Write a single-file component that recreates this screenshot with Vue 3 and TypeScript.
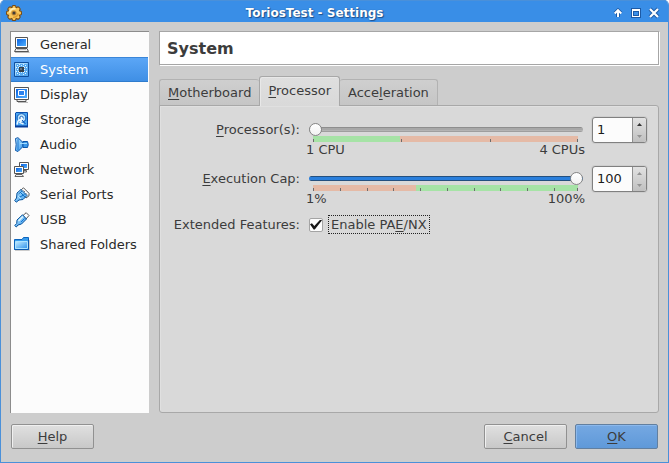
<script setup lang="ts">
import { computed, ref } from 'vue'

type Category =
  | 'General' | 'System' | 'Display' | 'Storage' | 'Audio'
  | 'Network' | 'Serial Ports' | 'USB' | 'Shared Folders'

interface TabItem {
  id: string
  before: string
  key: string
  after: string
}

const categories: Category[] = [
  'General', 'System', 'Display', 'Storage', 'Audio',
  'Network', 'Serial Ports', 'USB', 'Shared Folders',
]
const tabs: TabItem[] = [
  { id: 'motherboard', before: '', key: 'M', after: 'otherboard' },
  { id: 'processor', before: '', key: 'P', after: 'rocessor' },
  { id: 'acceleration', before: 'Acce', key: 'l', after: 'eration' },
]

const category = ref<Category>('System')
const activeTab = ref('processor')
const cpus = ref(1)
const cap = ref(100)
const pae = ref(true)

const CPU_MAX = 4
const CAP_MAX = 100

const position = (value: number, max: number): number => ((value - 1) / (max - 1)) * 100
const cpuTicks = [1, 2, 3, 4].map((v) => position(v, CPU_MAX))
const capTicks = [1, 11, 21, 31, 41, 51, 61, 71, 81, 91, 100].map((v) => position(v, CAP_MAX))
const cpuFill = computed(() => position(cpus.value, CPU_MAX))
const capFill = computed(() => position(cap.value, CAP_MAX))

function stepCpus(delta: number): void {
  cpus.value = Math.min(CPU_MAX, Math.max(1, cpus.value + delta))
}
function stepCap(delta: number): void {
  cap.value = Math.min(CAP_MAX, Math.max(1, cap.value + delta))
}
</script>

<template>
  <div class="window">
    <header class="titlebar">
      <svg class="gear" viewBox="0 0 16 16" aria-hidden="true">
        <g fill="#7a4a10">
          <rect v-for="a in [0, 45, 90, 135]" :key="a" x="5.6" y="0" width="4.8" height="16" rx="1.6" :transform="`rotate(${a} 8 8)`" />
          <circle cx="8" cy="8" r="6.6" />
        </g>
        <g fill="#f7c65c">
          <rect v-for="a in [0, 45, 90, 135]" :key="a" x="6.6" y="1" width="2.8" height="14" rx="1" :transform="`rotate(${a} 8 8)`" />
          <circle cx="8" cy="8" r="5.6" />
        </g>
        <path d="M3.6 7.6A4.5 4.5 0 0 1 9.5 3.8" fill="none" stroke="#ffeeb4" stroke-width="1.8" />
        <path d="M12.2 8.5A4.5 4.5 0 0 1 7 12.2" fill="none" stroke="#e29d2c" stroke-width="1.6" />
        <circle cx="8" cy="8" r="2.6" fill="#c48c35" />
        <circle cx="8" cy="8" r="1.5" fill="#403c38" />
      </svg>
      <h1>ToriosTest - Settings</h1>
      <div class="window-controls">
        <button type="button" aria-label="Shade">
          <svg viewBox="0 0 12 12"><path d="M6 10V4M3 6.5L6 3.5L9 6.5" fill="none" stroke="#1d5aa5" stroke-width="4" /><path d="M6 10V4M2.7 6.5L6 3.2L9.3 6.5" fill="none" stroke="#fff" stroke-width="2" /></svg>
        </button>
        <button type="button" aria-label="Maximize">
          <svg viewBox="0 0 12 12"><path d="M1 1H11V11H1Z" fill="#1d5aa5" /><path d="M2 2H10V10H2Z" fill="#fff" /><path d="M3 4H9V9H3Z" fill="#1d5aa5" /><path d="M4 5H8V8H4Z" fill="#3b8fe8" /></svg>
        </button>
        <button type="button" aria-label="Close">
          <svg viewBox="0 0 12 12"><path d="M2 2L10 10M10 2L2 10" stroke="#1d5aa5" stroke-width="4" /><path d="M2 2L10 10M10 2L2 10" stroke="#fff" stroke-width="2.2" /></svg>
        </button>
      </div>
    </header>

    <main class="body">
      <nav class="categories" aria-label="Categories">
        <button
          v-for="name in categories"
          :key="name"
          type="button"
          class="category"
          :class="{ selected: name === category }"
          @click="category = name"
        >
          <svg class="icon" viewBox="0 0 16 16" aria-hidden="true">
            <defs>
              <linearGradient id="screen" x1="0" y1="0" x2="1" y2="1">
                <stop offset="0" stop-color="#0a62e0" /><stop offset="1" stop-color="#4fb0ff" />
              </linearGradient>
              <linearGradient id="sky" x1="0" y1="0" x2="1" y2="1">
                <stop offset="0" stop-color="#c4ecff" /><stop offset="1" stop-color="#2f93ec" />
              </linearGradient>
            </defs>
            <g v-if="name === 'General'">
              <path d="M1.5 .5H13.5V10.5H1.5Z" fill="#fff" stroke="#555" />
              <path d="M3 2H12V9H3Z" fill="url(#screen)" />
              <path d="M2 11.5H13L14.5 14.5H.5Z" fill="#f4f4f4" stroke="#555" />
              <path d="M3 12.5H12" stroke="#bbb" />
              <path d="M1 15.5H15.5" stroke="#bbb" />
            </g>
            <g v-else-if="name === 'System'">
              <path d="M.5 .5H14.5V14.5H.5Z" fill="#58aaf0" stroke="#0f4f9e" />
              <path d="M1.5 13.5V1.5H13.5" fill="none" stroke="#a3d7fc" />
              <path d="M5.5 2V5M7.5 3V5M9.5 2V5M5.5 10V13M7.5 10V12M9.5 10V13" stroke="#d3edff" stroke-dasharray="1 1" />
              <path d="M2 5.5H5M3 7.5H5M2 9.5H5M10 5.5H13M10 7.5H12M10 9.5H13" stroke="#e4f5ff" stroke-dasharray="1 1" />
              <path d="M3 3L4 4M12 3L11 4M3 12L4 11M12 12L11 11" stroke="#e4f5ff" />
              <path d="M5 5H10V10H5Z" fill="#34404b" />
              <path d="M6 6H8V8H6Z" fill="#66727c" />
            </g>
            <g v-else-if="name === 'Display'">
              <path d="M.5 .5H14.5V12.5H.5Z" fill="#fff" stroke="#555" />
              <path d="M2 2H13V11H2Z" fill="url(#screen)" />
              <path d="M4.5 3.5H10.5V8.5H4.5Z" fill="#2c82ec" stroke="#fff" />
              <path d="M3 12.5H12V14.5H3Z" fill="#eee" stroke="#555" />
              <path d="M4 15.5H14" stroke="#bbb" />
            </g>
            <g v-else-if="name === 'Storage'">
              <path d="M2 .5H13.5V14.5H1.5V1Z" fill="#4aa5f2" stroke="#0a4fae" />
              <path d="M1 14.5H14" stroke="#083e9b" stroke-width="2" />
              <circle cx="7.5" cy="6" r="4.4" fill="#b9e2fc" stroke="#0c57b5" />
              <circle cx="7.5" cy="6" r="1.7" fill="#fff" stroke="#1764c0" />
              <path d="M3 12.5L4 9L9 6.5L6 10.5L9.5 12" fill="none" stroke="#e9f7ff" stroke-width="1.5" />
              <path d="M8 8L11.5 12" stroke="#0a52b5" />
            </g>
            <g v-else-if="name === 'Audio'">
              <path d="M1.5 1.5L4 .7L9 5.5V9.5L4 14.5L1.5 13.5Q2.8 7.5 1.5 1.5Z" fill="url(#sky)" stroke="#0b55aa" />
              <path d="M4 2V13" stroke="#1572d0" />
              <path d="M9 4.5H13.5Q15 7.5 13.5 10.5H9Z" fill="#3b98e8" stroke="#0b55aa" />
              <path d="M6 6.5L13 6.5" stroke="#a4ddff" />
            </g>
            <g v-else-if="name === 'Network'">
              <path d="M5.5 .5H14.5V7.5H5.5Z" fill="#fff" stroke="#555" />
              <path d="M7 2H13V6H7Z" fill="url(#screen)" />
              <path d="M8.5 8.5H12.5V10H8.5Z" fill="#eee" stroke="#666" />
              <path d="M.5 4.5H9.5V11.5H.5Z" fill="#fff" stroke="#555" />
              <path d="M2 6H8V10H2Z" fill="url(#screen)" />
              <path d="M2 12.5H8L9.5 14.5H1Z" fill="#eee" stroke="#666" />
            </g>
            <g v-else-if="name === 'Serial Ports'">
              <path d="M7 3L9.5 .8L15 6.3V8.8L12 11Z" fill="#fff" stroke="#555" />
              <path d="M9.5 3.5L11 5M11.5 6L13 7.5" stroke="#777" />
              <path d="M3 6L7 2.5L13 8.5L9 12.5L5 13L2.3 15.2L.7 13.5L2.5 11Z" fill="url(#sky)" stroke="#07539c" />
              <path d="M4.5 7L8 4M5 10.5L10.5 7.5M6 5L11 10" stroke="#0d70c4" />
              <path d="M4 9L7 12" stroke="#b8e8ff" />
            </g>
            <g v-else-if="name === 'USB'">
              <path d="M9 3.5L12.2 .7L15 3.5L12 7Z" fill="#fff" stroke="#555" />
              <path d="M3 8L8.5 2.8L12.5 7L7.5 12L4 13L2.3 15L.7 13.5L2.7 11.5Z" fill="url(#sky)" stroke="#07539c" />
              <path d="M4.5 9L9 4.5" stroke="#dff6ff" stroke-width="1.5" />
              <path d="M7 10L10.5 6.5" stroke="#1275d4" />
            </g>
            <g v-else>
              <path d="M.5 2.5H8L9.5 .5H14.5V12.5H.5Z" fill="#389ded" stroke="#0e65bc" />
              <path d="M1.5 4.5H13.5V11.5H1.5Z" fill="url(#sky)" stroke="#aee4ff" />
              <path d="M.5 12.5H14.5V2" fill="none" stroke="#0b58ae" />
              <path d="M1 13.5H15.5V3" fill="none" stroke="#ccc" />
            </g>
          </svg>
          <span>{{ name }}</span>
        </button>
      </nav>

      <section class="content">
        <h2 class="heading">{{ category }}</h2>

        <div class="tabs" role="tablist">
          <button
            v-for="tab in tabs"
            :key="tab.id"
            type="button"
            role="tab"
            class="tab"
            :class="{ active: tab.id === activeTab }"
            :aria-selected="tab.id === activeTab"
            @click="activeTab = tab.id"
          >{{ tab.before }}<u>{{ tab.key }}</u>{{ tab.after }}</button>
        </div>

        <div class="pane" role="tabpanel">
          <template v-if="activeTab === 'processor'">
            <label class="field-label" for="cpus"><u>P</u>rocessor(s):</label>
            <div class="slider">
              <input v-model.number="cpus" type="range" min="1" :max="CPU_MAX" aria-label="Processor count" :style="{ '--fill': cpuFill + '%' }" />
              <div class="scale cpu-scale">
                <i v-for="t in cpuTicks" :key="t" :style="{ left: t + '%' }"></i>
              </div>
              <div class="range-labels"><span>1 CPU</span><span>4 CPUs</span></div>
            </div>
            <div class="spin">
              <input id="cpus" v-model.number="cpus" type="number" min="1" :max="CPU_MAX" />
              <div class="arrows">
                <button type="button" aria-label="More processors" :disabled="cpus >= CPU_MAX" @click="stepCpus(1)"><svg viewBox="0 0 5 3"><path d="M0 3L2.5 0L5 3Z" /></svg></button>
                <button type="button" aria-label="Fewer processors" :disabled="cpus <= 1" @click="stepCpus(-1)"><svg viewBox="0 0 5 3"><path d="M0 0L2.5 3L5 0Z" /></svg></button>
              </div>
            </div>

            <label class="field-label" for="cap"><u>E</u>xecution Cap:</label>
            <div class="slider">
              <input v-model.number="cap" type="range" min="1" :max="CAP_MAX" aria-label="Execution cap percent" :style="{ '--fill': capFill + '%' }" />
              <div class="scale cap-scale">
                <i v-for="t in capTicks" :key="t" :style="{ left: t + '%' }"></i>
              </div>
              <div class="range-labels"><span>1%</span><span>100%</span></div>
            </div>
            <div class="spin">
              <input id="cap" v-model.number="cap" type="number" min="1" :max="CAP_MAX" />
              <div class="arrows">
                <button type="button" aria-label="Raise cap" :disabled="cap >= CAP_MAX" @click="stepCap(1)"><svg viewBox="0 0 5 3"><path d="M0 3L2.5 0L5 3Z" /></svg></button>
                <button type="button" aria-label="Lower cap" class="dim" @click="stepCap(-1)"><svg viewBox="0 0 5 3"><path d="M0 0L2.5 3L5 0Z" /></svg></button>
              </div>
            </div>

            <span class="field-label feature-label">Extended Features:</span>
            <div class="feature">
              <input id="pae" v-model="pae" type="checkbox" />
              <label for="pae">Enable PA<u>E</u>/NX</label>
            </div>
          </template>
        </div>
      </section>
    </main>

    <footer class="actions">
      <button type="button" class="action help"><span><u>H</u>elp</span></button>
      <button type="button" class="action"><span><u>C</u>ancel</span></button>
      <button type="button" class="action primary"><span><u>O</u>K</span></button>
    </footer>
  </div>
</template>

<style>
body {
  background: #fff;
}
</style>

<style scoped>
.window,
.window * {
  box-sizing: border-box;
}

.window {
  display: flex;
  flex-direction: column;
  min-height: 100vh;
  border: 1px solid #4a90d9;
  border-top: 0;
  border-radius: 5px 5px 0 0;
  background: #cdcdcd;
  color: #3c3c3c;
  font: 13px/16px "DejaVu Sans", sans-serif;
  overflow: hidden;
}

button,
input {
  margin: 0;
  font: inherit;
  color: inherit;
}

button {
  padding: 0;
  border: 0;
  background: none;
}

u {
  text-decoration-thickness: 1px;
  text-underline-offset: 2px;
}

.titlebar {
  display: grid;
  grid-template-columns: 27px 1fr 64px;
  align-items: center;
  height: 22px;
  padding: 2px 8px 0 5px;
  border-top: 1px solid #4a90d9;
  background: #398ee7;
}

.titlebar h1 {
  margin: 0;
  color: #fff;
  font-size: 12px;
  line-height: 16px;
  text-align: center;
  white-space: nowrap;
  text-shadow: 1px 1px 1px #1c4f8c, 0 0 1px #1c4f8c;
}

.gear {
  width: 16px;
  height: 16px;
}

.window-controls {
  display: flex;
  justify-content: flex-end;
  gap: 6px;
}

.window-controls svg {
  display: block;
  width: 12px;
  height: 12px;
}

.body {
  display: grid;
  grid-template-columns: 139px 1fr;
  gap: 10px;
  flex: 1;
  padding: 9px 9px 0;
}

.categories {
  padding-right: 1px;
  border-top: 1px solid #8c8c8c;
  border-left: 1px solid #8c8c8c;
  background: #fcfcfc;
}

.category {
  display: flex;
  align-items: center;
  gap: 10px;
  width: 100%;
  height: 25px;
  padding: 0 3px;
  color: #2a2a2a;
  text-align: left;
  white-space: nowrap;
}

.category.selected {
  border-top: 1px solid #3a86d8;
  border-bottom: 1px solid #2f7ccd;
  background: linear-gradient(#5ba6f6, #3f8fe5);
  color: #fff;
}

.icon {
  flex: none;
  width: 16px;
  height: 16px;
}

.content {
  display: flex;
  flex-direction: column;
  min-width: 0;
}

.heading {
  margin: 0;
  padding: 8px 7px 6px;
  border: 1px solid #a6a6a6;
  box-shadow: 1px 1px #fff;
  background: #fff;
  font-size: 16px;
  line-height: 18px;
}

.tabs {
  display: flex;
  align-items: flex-end;
  height: 30px;
  margin-top: 11px;
}

.tab {
  height: 27px;
  padding: 0 8px 1px;
  border: 1px solid #b2b2b2;
  border-bottom: 0;
  border-radius: 3px 3px 0 0;
  background: linear-gradient(#cfcfcf, #c5c5c5);
  white-space: nowrap;
}

.tab.active {
  position: relative;
  height: 30px;
  border-color: #a8a8a8;
  box-shadow: inset 1px 1px #e8e8e8;
  background: linear-gradient(#dfdfdf, #d9d9d9);
}

.tab:first-child:not(.active) {
  border-right: 0;
}

.tab:last-child:not(.active) {
  border-left: 0;
}

.pane {
  display: grid;
  grid-template-columns: minmax(129px, auto) 1fr 55px;
  align-content: start;
  gap: 8px 9px;
  flex: 1;
  margin-top: -1px;
  padding: 11px 11px 0;
  border: 1px solid #a8a8a8;
  border-radius: 0 3px 3px 3px;
  box-shadow: inset 1px 1px #e0e0e0;
  background: #d9d9d9;
}

.field-label {
  line-height: 26px;
  text-align: right;
  white-space: nowrap;
}

.slider {
  display: flex;
  flex-direction: column;
  min-width: 0;
  padding-top: 5px;
}

.slider input {
  display: block;
  width: 100%;
  height: 14px;
  appearance: none;
  background: none;
}

.slider input::-webkit-slider-runnable-track {
  height: 5px;
  border-radius: 3px;
  background:
    linear-gradient(#24507f 1px, #2a7fdc 1px 4px, #24507f 4px) 0 0 / var(--fill) 100% no-repeat,
    linear-gradient(#8e8e8e 1px, #a8a8a8 1px 3px, #b4b4b4 3px 4px, #9e9e9e 4px);
}

.slider input::-webkit-slider-thumb {
  width: 13px;
  height: 13px;
  margin-top: -4px;
  appearance: none;
  border: 1px solid #858585;
  border-radius: 50%;
  background: linear-gradient(#fff, #f2f2f2);
}

.scale {
  position: relative;
  height: 6px;
  margin: 0 5px 0 4px;
}

.cpu-scale {
  background: linear-gradient(to right, #a6e3a6 33%, #e5baa6 33%);
}

.cap-scale {
  background: linear-gradient(to right, #e5baa6 39%, #a6e3a6 39%);
}

.scale i {
  position: absolute;
  bottom: 0;
  width: 1px;
  height: 3px;
  background: #6c6c6c;
}

.scale i:last-child {
  margin-left: -1px;
}

.range-labels {
  display: flex;
  justify-content: space-between;
  margin: 0 -2px 0 -3px;
}

.spin {
  display: flex;
  height: 26px;
  border: 1px solid #808080;
  border-radius: 3px;
  box-shadow: 0 0 0 1px #cecece;
  background: #fcfcfc;
  overflow: hidden;
}

.spin input {
  flex: 1;
  min-width: 0;
  padding: 0 4px;
  border: 0;
  outline: 0;
  appearance: textfield;
  background: none;
  color: #1c1c1c;
}

.spin input::-webkit-inner-spin-button {
  appearance: none;
}

.arrows {
  display: grid;
  grid-template-rows: 1fr 1fr;
  width: 14px;
  border-left: 1px solid #8f8f8f;
  background: linear-gradient(#e2e2e2, #c0c0c0);
}

.arrows button {
  display: grid;
  place-items: center;
}

.arrows svg {
  width: 5px;
  height: 3px;
  fill: #333;
}

.arrows button:disabled svg,
.arrows .dim svg {
  fill: #949494;
}

.feature-label {
  line-height: 19px;
}

.feature {
  display: flex;
  align-items: center;
  gap: 5px;
  grid-column: span 2;
}

.feature input {
  display: grid;
  place-items: center;
  width: 14px;
  height: 14px;
  appearance: none;
  border: 1px solid #a4a4a4;
  border-radius: 2px;
  background: #fcfcfc;
}

.feature input:checked::before {
  content: "";
  width: 12px;
  height: 10px;
  background: #161616;
  clip-path: polygon(0 48%, 16% 38%, 36% 66%, 86% 0, 100% 8%, 40% 100%, 30% 100%);
}

.feature label {
  height: 19px;
  padding: 0 2px;
  border: 1px dotted #222;
  line-height: 17px;
}

.actions {
  display: flex;
  gap: 8px;
  padding: 11px 10px 13px;
}

.action {
  width: 83px;
  height: 25px;
  border: 1px solid #919191;
  border-radius: 2px;
  box-shadow: inset 1px 1px #f0f0f0;
  background: linear-gradient(#e0e0e0, #c8c8c8);
}

.action.help {
  margin-right: auto;
}

.action.primary {
  border-color: #627f9f;
  box-shadow: inset 1px 1px #8bb8ec;
  background: linear-gradient(#75a8e2, #5f99d9);
}
</style>
